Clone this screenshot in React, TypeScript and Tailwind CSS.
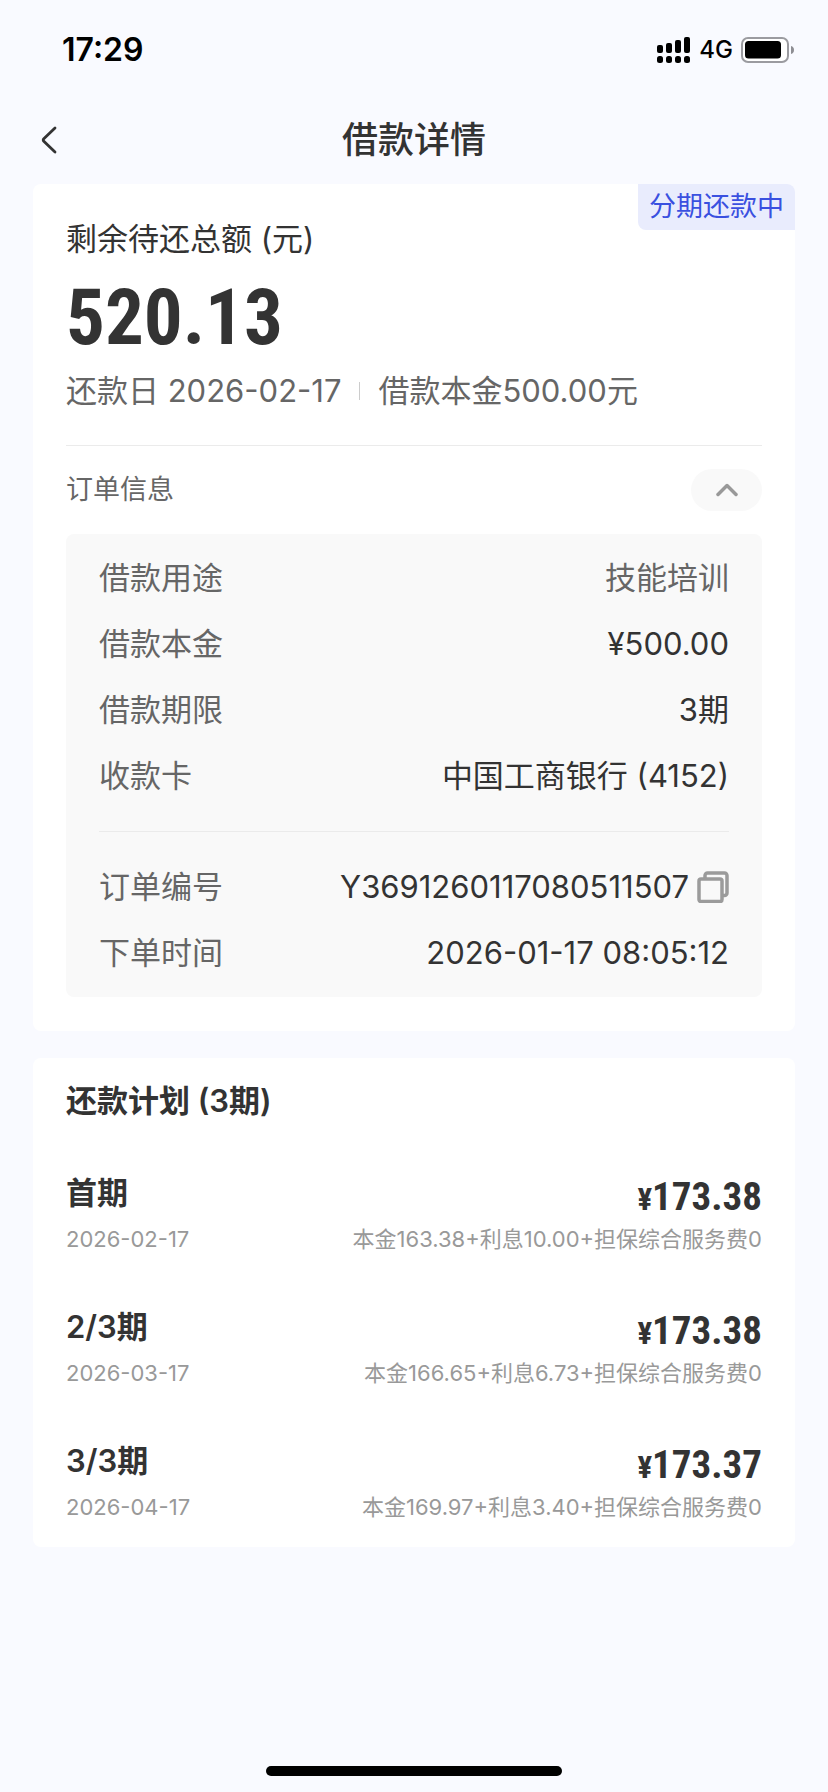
import React, { useState } from 'react';

interface InfoRowProps {
  label: string;
  children: React.ReactNode;
  muted?: boolean;
}

interface Installment {
  title: string;
  date: string;
  amount: string;
  detail: string;
}

const installments: Installment[] = [
  {
    title: '首期',
    date: '2026-02-17',
    amount: '173.38',
    detail: '本金163.38+利息10.00+担保综合服务费0',
  },
  {
    title: '2/3期',
    date: '2026-03-17',
    amount: '173.38',
    detail: '本金166.65+利息6.73+担保综合服务费0',
  },
  {
    title: '3/3期',
    date: '2026-04-17',
    amount: '173.37',
    detail: '本金169.97+利息3.40+担保综合服务费0',
  },
];

const SignalIcon: React.FC = () => (
  <svg width="34" height="26" viewBox="0 0 34 26" fill="#000" aria-hidden="true">
    <rect x="0" y="8" width="6" height="8" rx="2" />
    <rect x="9" y="6" width="6" height="10" rx="2" />
    <rect x="18" y="3" width="6" height="13" rx="2" />
    <rect x="27" y="0" width="6" height="16" rx="2" />
    <rect x="0" y="19" width="6" height="7" rx="2.5" />
    <rect x="9" y="19" width="6" height="7" rx="2.5" />
    <rect x="18" y="19" width="6" height="7" rx="2.5" />
    <rect x="27" y="19" width="6" height="7" rx="2.5" />
  </svg>
);

const BatteryIcon: React.FC = () => (
  <svg width="54" height="26" viewBox="0 0 54 26" fill="none" aria-hidden="true">
    <rect x="1" y="1" width="46" height="24" rx="6" fill="#fff" stroke="#9b9ba0" strokeWidth="2" />
    <rect x="4" y="4" width="36" height="17.5" rx="3.5" fill="#000" />
    <path d="M50 9c2 .6 3 2 3 4s-1 3.4-3 4z" fill="#8e8e93" />
  </svg>
);

const CopyIcon: React.FC = () => (
  <svg width="32" height="32" viewBox="0 0 32 32" fill="none" stroke="#9b9b9b" strokeWidth="3.5" aria-hidden="true">
    <path d="M8 7V4.5A2.5 2.5 0 0 1 10.5 2H27.5A2.5 2.5 0 0 1 30 4.5V22A2.5 2.5 0 0 1 27.5 24.5H25.5" />
    <rect x="2" y="8" width="23" height="22.5" rx="2" />
  </svg>
);

const InfoRow: React.FC<InfoRowProps> = ({ label, children, muted = false }) => (
  <div className="flex h-[66px] items-center justify-between">
    <dt className="text-[#666]">{label}</dt>
    <dd className={`flex items-center gap-2 ${muted ? 'text-[#666]' : ''}`}>{children}</dd>
  </div>
);

const App: React.FC = () => {
  const [expanded, setExpanded] = useState(true);

  return (
    <div className="flex min-h-screen flex-col bg-[#f9faff] font-['Inter','Noto_Sans_CJK_SC',sans-serif] text-[#333]">
      {/* Status bar */}
      <div className="flex h-[100px] items-center justify-between pr-[33px] pl-[62px] text-black">
        <span className="text-[32px] font-semibold">17:29</span>
        <div className="flex items-center gap-2">
          <SignalIcon />
          <span className="text-2xl font-medium">4G</span>
          <BatteryIcon />
        </div>
      </div>

      {/* Navigation */}
      <header className="grid h-[84px] grid-cols-[1fr_auto_1fr] items-center px-[33px] pb-1">
        <button type="button" aria-label="返回" className="flex h-14 w-14 items-center pl-2">
          <svg width="16" height="28" viewBox="0 0 16 28" fill="none" stroke="#333" strokeWidth="2.8" strokeLinecap="round" strokeLinejoin="round">
            <path d="M14 2 2.8 12.8Q1.6 14 2.8 15.2L14 26" />
          </svg>
        </button>
        <h1 className="text-[36px] font-medium">借款详情</h1>
      </header>

      <main className="flex flex-col gap-[27px] px-[33px]">
        <section className="relative rounded-lg bg-white px-[33px] pt-8 pb-[34px]">
          <span className="absolute top-0 right-0 flex h-[46px] items-center rounded-tr-lg rounded-bl-lg bg-[#e9ecfd] px-[11px] text-[27px] text-[#3a50e0]">
            分期还款中
          </span>

          <h2 className="text-[31px] leading-[46px]">剩余待还总额 (元)</h2>
          <p className="mt-2.5 font-['Roboto_Condensed','Roboto',sans-serif] text-[77px] leading-[92px] font-bold">
            520.13
          </p>
          <div className="mt-1 flex items-center text-[31px] leading-[46px] text-[#666]">
            <span>还款日 2026-02-17</span>
            <span className="mx-[18px] h-[18px] w-px bg-[#ccc]" />
            <span>借款本金500.00元</span>
          </div>

          <div className="mt-[31px] flex h-[89px] items-center justify-between border-t border-[#ebebeb]">
            <h3 className="text-[27px] text-[#666]">订单信息</h3>
            <button
              type="button"
              aria-label="订单信息"
              aria-expanded={expanded}
              onClick={() => setExpanded(!expanded)}
              className="flex h-[42px] w-[71px] items-center justify-center rounded-full bg-[#f9f9f9]"
            >
              <svg width="22" height="14" viewBox="0 0 22 14" fill="none" stroke="#999" strokeWidth="3.5" strokeLinecap="round" strokeLinejoin="round">
                <path d={expanded ? 'M2 11.5 11 2.5 20 11.5' : 'M2 2.5 11 11.5 20 2.5'} />
              </svg>
            </button>
          </div>

          {expanded && (
            <div className="rounded-lg bg-[#f9f9f9] px-[33px] py-[11px] text-[31px]">
              <dl>
                <InfoRow label="借款用途" muted>技能培训</InfoRow>
                <InfoRow label="借款本金">¥500.00</InfoRow>
                <InfoRow label="借款期限">3期</InfoRow>
                <InfoRow label="收款卡">中国工商银行 (4152)</InfoRow>
              </dl>
              <hr className="my-[22px] border-[#ebebeb]" />
              <dl>
                <InfoRow label="订单编号">
                  Y3691260117080511507
                  <button type="button" aria-label="复制订单编号">
                    <CopyIcon />
                  </button>
                </InfoRow>
                <InfoRow label="下单时间">2026-01-17 08:05:12</InfoRow>
              </dl>
            </div>
          )}
        </section>

        <section className="rounded-lg bg-white px-[33px] pt-5 pb-6">
          <h2 className="text-[31px] leading-[46px] font-semibold">还款计划 (3期)</h2>
          <ul className="mt-[45px] flex flex-col gap-12">
            {installments.map((item) => (
              <li key={item.title}>
                <div className="flex h-[54px] items-start justify-between">
                  <h3 className="text-[31px] leading-[48px] font-semibold">{item.title}</h3>
                  <p className="font-['Roboto_Condensed','Roboto',sans-serif] text-[39px] leading-[56px] font-bold">
                    <span className="text-[31px]">¥</span>
                    {item.amount}
                  </p>
                </div>
                <div className="flex h-8 items-center justify-between text-[22px] text-[#999]">
                  <time dateTime={item.date}>{item.date}</time>
                  <span>{item.detail}</span>
                </div>
              </li>
            ))}
          </ul>
        </section>
      </main>

      {/* Home indicator */}
      <div className="mt-auto mb-4 h-2.5 w-[296px] self-center rounded-full bg-black" />
    </div>
  );
};

export default App;
